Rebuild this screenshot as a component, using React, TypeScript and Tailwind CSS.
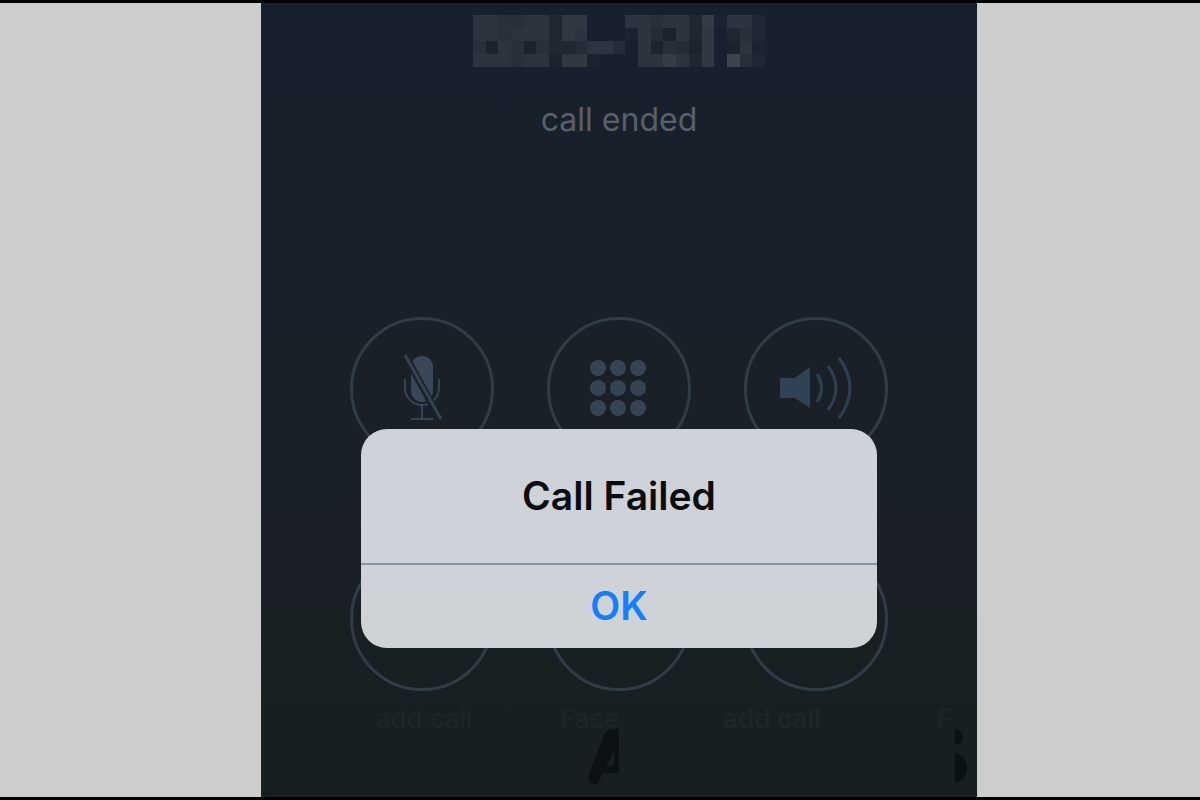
import type { ReactNode } from 'react';

const CELL = 13;

// Opacity (0-9) of every block in the censored phone number
const NUMBER_MOSAIC = [
  '55445526600055455271552',
  '55455526500015315260242',
  '41541422355305143160151',
  '55545516610005575260942',
];

const CensoredNumber = () => (
  <svg
    viewBox={`0 0 ${23 * CELL} ${4 * CELL}`}
    preserveAspectRatio="none"
    className="h-[52px] w-[292px] text-[#8f9498]"
    shapeRendering="crispEdges"
    role="img"
  >
    {NUMBER_MOSAIC.map((row, y) =>
      row.split('').map((value, x) => (
        <rect
          key={`${x}-${y}`}
          x={x * CELL}
          y={y * CELL}
          width={CELL}
          height={CELL}
          fill="currentColor"
          opacity={Number(value) * 0.035}
        />
      ))
    )}
  </svg>
);

const MuteIcon = () => (
  <svg viewBox="0 0 144 144" className="size-full" fill="none">
    <rect x="61" y="39" width="22" height="46" rx="11" fill="#394757" />
    <path d="M55 62v9a17 17 0 0 0 34 0v-9M72 89v13M61 102h22" stroke="#364352" strokeWidth="2" />
    <path d="M55 38l35 64" stroke="#1a212a" strokeWidth="7" />
    <path d="M55 38l36 64" stroke="#364250" strokeWidth="3" />
  </svg>
);

const KeypadIcon = () => (
  <svg viewBox="0 0 144 144" className="size-full" fill="#364352">
    {[51, 71, 91].map((cy) =>
      [51, 71, 91].map((cx) => <circle key={`${cx}-${cy}`} cx={cx} cy={cy} r="8" />)
    )}
  </svg>
);

const SpeakerIcon = () => (
  <svg viewBox="0 0 144 144" className="size-full" fill="none">
    <path d="M36 61h15l15-11v41L51 81H36z" fill="#304354" />
    <path
      d="M73 57q9 14 0 28M84 49q16 22 0 44M95 41q22 30 0 60"
      stroke="#304050"
      strokeWidth="3"
    />
  </svg>
);

interface CallAction {
  id: string;
  name: string;
  icon?: ReactNode;
}

const topActions: CallAction[] = [
  { id: 'mute', name: 'mute', icon: <MuteIcon /> },
  { id: 'keypad', name: 'keypad', icon: <KeypadIcon /> },
  { id: 'speaker', name: 'speaker', icon: <SpeakerIcon /> },
];

const bottomActions: CallAction[] = [
  { id: 'add', name: 'add call' },
  { id: 'facetime', name: 'FaceTime' },
  { id: 'contacts', name: 'contacts' },
];

const ActionRow = ({ actions }: { actions: CallAction[] }) => (
  <div className="flex justify-center gap-[53px]">
    {actions.map((action) => (
      <button
        key={action.id}
        type="button"
        aria-label={action.name}
        className="size-36 shrink-0 rounded-full border-3 border-[#313c47]"
      >
        <span className="-m-[3px] block">{action.icon}</span>
      </button>
    ))}
  </div>
);

const GhostLabels = () => (
  <div className="flex h-5 pl-[115px] text-[26px] leading-6 text-[#1d2629]">
    <span className="w-[184px]">add call</span>
    <span className="w-[163px]">Face</span>
    <span className="w-[214px] font-semibold">add call</span>
    <span>F</span>
  </div>
);

// Leftover lettering, cut off at the edge of each tile
const GhostShapes = () => (
  <svg viewBox="0 0 716 62" className="w-full" fill="#0c1214">
    <path
      fillRule="evenodd"
      d="M358 2h-6q-7 0-10 8l-14 38q-2 8 4 9 6 1 8-7l2-4h16zM353 25v14h-8z"
    />
    <path d="M694 1q8 3 8 9t-8 8zM694 25q12 5 12 16t-12 15z" />
  </svg>
);

const CallFailedDialog = () => (
  <div
    role="alertdialog"
    aria-labelledby="dialog-title"
    className="w-[516px] overflow-hidden rounded-[26px] bg-linear-to-b from-[#ced2da] to-[#ced3d7]"
  >
    <h2
      id="dialog-title"
      className="flex h-[134px] items-center justify-center text-[39px] font-semibold text-[#0b0c0e]"
    >
      Call Failed
    </h2>
    <button
      type="button"
      className="h-[85px] w-full border-t-2 border-[#8794a2] text-[39px] font-semibold text-[#157efb]"
    >
      OK
    </button>
  </div>
);

const App = () => {
  return (
    <div className="grid min-h-screen grid-cols-[261fr_716fr_223fr] border-y-3 border-black bg-[#cdcdcd] font-['Inter','Liberation_Sans',sans-serif]">
      <main className="relative col-start-2 flex flex-col overflow-hidden bg-linear-to-b from-[#17202d] via-[#1a2028] to-[#181f20]">
        <header className="flex flex-col items-center pt-3">
          <CensoredNumber />
          <p className="mt-8 text-[32px] leading-[42px] text-[#59606a]">call ended</p>
        </header>
        <section className="mt-44 flex flex-col gap-[86px]">
          <ActionRow actions={topActions} />
          <ActionRow actions={bottomActions} />
        </section>
        <footer className="mt-4">
          <GhostLabels />
          <GhostShapes />
        </footer>
        <div className="absolute inset-0 flex items-start justify-center pt-[426px]">
          <CallFailedDialog />
        </div>
      </main>
    </div>
  );
};

export default App;
